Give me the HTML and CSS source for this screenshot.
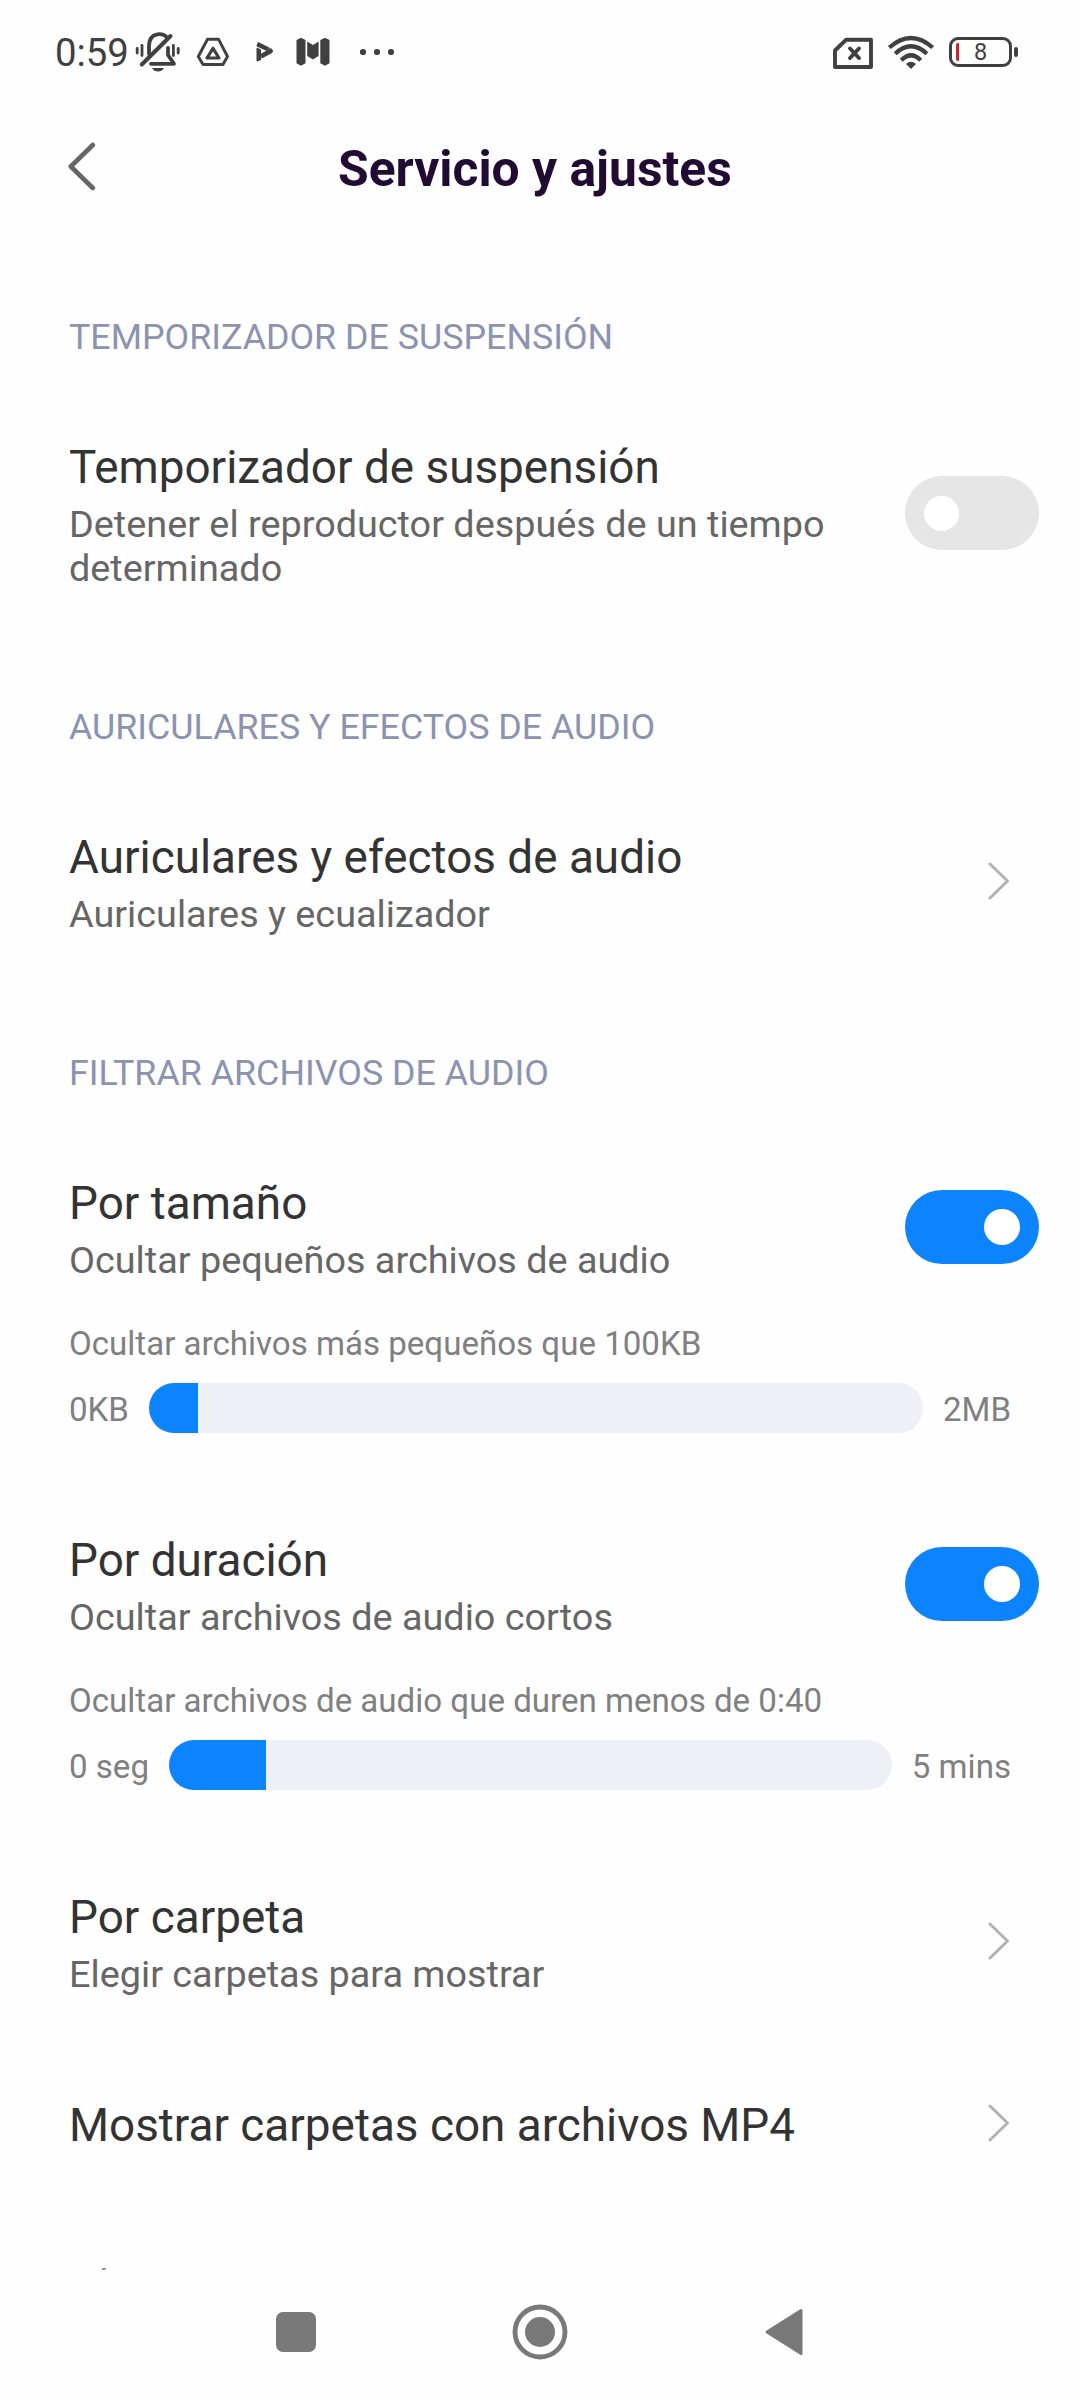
FILE: index.html
```
<!DOCTYPE html>
<html lang="es">
<head>
<meta charset="utf-8">
<title>Servicio y ajustes</title>
<link rel="stylesheet" href="styles.css">
</head>
<body>
<header class="status">
  <span class="clock">0:59</span>
  <svg class="bell" width="48" height="44" viewBox="134 30 48 44" fill="none" stroke="#404040" stroke-width="3.4" stroke-linecap="round" stroke-linejoin="round">
    <path d="M137.2 48.5v4.5M142 45.5v10M173.4 45.5v10M178.2 48.5v4.5" stroke-width="2.8"/>
    <path d="M149 54V46C149 31 165 32.500 167 38M168 48v7l6 8.800H151" stroke-width="3.800"/>
    <path d="M141.800 64.500L170.500 36" stroke-width="4"/>
    <path d="M152 68h12q-2 3.500-6 3.500t-6-3.500z" fill="#404040" stroke="none"/>
  </svg>
  <svg class="drive" width="34" height="32" viewBox="196 36 34 32" fill="none" stroke="#404040" stroke-linejoin="round">
    <path d="M207.500 39.200h11l9 17.300-4.500 8h-20l-4.700-8z" stroke-width="2.900"/>
    <path d="M213 48.300l6 9.700h-12z" stroke-width="3.200"/>
  </svg>
  <svg class="play" width="20" height="22" viewBox="255 41 20 22" fill="#404040" stroke="#404040" stroke-width="1.400" stroke-linejoin="round">
    <path d="M257.200 48.500l3.200 1.600v9.400l-3.200 1.200zM257.200 45.800l1.200-3 10.500 5.300-3 1.800zM261.800 54l5.500-3.200 3.600-1.800 1.500 2.200-.8 1.200-9.500 5.200z"/>
  </svg>
  <svg class="moovit" width="34" height="30" viewBox="296 37 34 30" fill="#404040">
    <path d="M296.500 40l4.500-2.300 4.500 2.300v23.200l-4.500 2.500-4.500-2.500zM320.300 40l4.700-2.300 4.500 2.300v23.200l-4.500 2.500-4.700-2.500zM307.200 41.500l5.700 3.500 5.700-3.500v14.500l-5.700 3.600-5.700-3.600z"/>
  </svg>
  <svg class="more" width="36" height="8" viewBox="359 48 36 8" fill="#404040"><circle cx="363" cy="52" r="3.100"/><circle cx="377" cy="52" r="3.100"/><circle cx="391" cy="52" r="3.100"/></svg>
  <svg class="sim" width="42" height="34" viewBox="832 36 42 34" fill="none" stroke="#404040" stroke-width="3.900" stroke-linecap="round" stroke-linejoin="round">
    <path d="M846 39.800h25v27.200h-36v-16.500zM850 48.500l9 9.500M859 48.500l-9 9.500"/>
  </svg>
  <svg class="wifi" width="48" height="36" viewBox="887 34 48 36" fill="none" stroke="#404040" stroke-width="4.300">
    <path d="M889.300 47.500Q911 28.500 932.700 47.500M895.200 53.700Q911 39 926.800 53.700M901.300 60.200Q911 50.500 920.700 60.200"/>
    <path d="M906 64q5-4.600 10 0l-5 5z" fill="#404040" stroke="none"/>
  </svg>
  <div class="battery"><i class="charge"></i><span>8</span></div><i class="nub"></i>
</header>

<div class="titlebar">
  <svg width="30" height="50" viewBox="67 141 30 50" fill="none" stroke="#666" stroke-width="4.600" stroke-linecap="round" stroke-linejoin="round"><path d="M92.800 145L70.800 166.500 92.800 188"/></svg>
  <h1>Servicio y ajustes</h1>
</div>

<main class="list">
  <h2>TEMPORIZADOR DE SUSPENSIÓN</h2>
  <div class="item">
    <div class="text"><div class="name">Temporizador de suspensión</div><div class="sub">Detener el reproductor después de un tiempo determinado</div></div>
    <div class="toggle"><i></i></div>
  </div>

  <h2>AURICULARES Y EFECTOS DE AUDIO</h2>
  <div class="item">
    <div class="text"><div class="name">Auriculares y efectos de audio</div><div class="sub">Auriculares y ecualizador</div></div>
    <svg class="go" width="22" height="38" viewBox="0 0 22 38"><path d="M2 2l17.500 17L2 36"/></svg>
  </div>

  <h2>FILTRAR ARCHIVOS DE AUDIO</h2>
  <div class="item">
    <div class="text"><div class="name">Por tamaño</div><div class="sub">Ocultar pequeños archivos de audio</div></div>
    <div class="toggle on"><i></i></div>
  </div>
  <div class="range">
    <div class="hint">Ocultar archivos más pequeños que 100KB</div>
    <div class="scale"><span>0KB</span><div class="track"><div class="fill" style="width:6.350%"></div></div><span>2MB</span></div>
  </div>
  <div class="item">
    <div class="text"><div class="name">Por duración</div><div class="sub">Ocultar archivos de audio cortos</div></div>
    <div class="toggle on"><i></i></div>
  </div>
  <div class="range">
    <div class="hint">Ocultar archivos de audio que duren menos de 0:40</div>
    <div class="scale"><span>0 seg</span><div class="track"><div class="fill" style="width:13.400%"></div></div><span>5 mins</span></div>
  </div>
  <div class="item">
    <div class="text"><div class="name">Por carpeta</div><div class="sub">Elegir carpetas para mostrar</div></div>
    <svg class="go" width="22" height="38" viewBox="0 0 22 38"><path d="M2 2l17.500 17L2 36"/></svg>
  </div>
  <div class="item single">
    <div class="text"><div class="name">Mostrar carpetas con archivos MP4</div></div>
    <svg class="go" width="22" height="38" viewBox="0 0 22 38"><path d="M2 2l17.500 17L2 36"/></svg>
  </div>
  <h2>TÉCNICO</h2>
</main>

<nav class="nav">
  <svg width="40" height="40" viewBox="0 0 40 40"><rect width="40" height="40" rx="7"/></svg>
  <svg width="56" height="56" viewBox="0 0 56 56"><circle cx="28" cy="28" r="25" fill="none" stroke="#797979" stroke-width="4.800"/><circle cx="28" cy="28" r="15"/></svg>
  <svg width="38" height="48" viewBox="0 0 38 48"><path d="M2 24L36 2.500v43z" stroke="#797979" stroke-width="3" stroke-linejoin="round"/></svg>
</nav>
</body>
</html>
```
FILE: styles.css
```
* { box-sizing: border-box; }
body { margin: 0; height: 2400px; display: flex; flex-direction: column; overflow: hidden; background: #fefefe; font-family: Roboto, sans-serif; }
svg { display: block; flex: none; }

.status { height: 104px; flex: none; display: flex; align-items: center; padding: 0 62px 0 55px; color: #404040; }
.clock { width: 79px; padding-top: 2px; font-size: 38.300px; line-height: 46px; }
.drive { margin-left: 14px; }
.play { margin-left: 25px; }
.moovit { margin-left: 21px; }
.more { margin-left: 29px; }
.sim { margin: 2px 13px 0 auto; }
.battery { width: 63px; height: 30px; margin-left: 14px; border: 3.300px solid #404040; border-radius: 9px; display: flex; align-items: center; font-size: 23.500px; line-height: 24px; }
.battery span { flex: 1; padding-left: 15px; }
.charge { width: 3px; height: 18px; margin-left: 4px; border-radius: 2px 0 0 2px; background: #c82828; }
.nub { width: 4px; height: 10px; margin-left: 2px; border-radius: 2px; background: #404040; }

.titlebar { height: 212px; flex: none; display: flex; align-items: flex-start; padding: 36px 0 0 67px; }
.titlebar svg { margin-top: 1px; }
h1 { margin: 0 0 0 241px; font-size: 49.750px; line-height: 58px; font-weight: 700; color: #220b33; }

.list { height: 1954px; flex: none; overflow: hidden; padding-left: 69px; }
h2 { margin: 0 0 82px; font-size: 35.800px; line-height: 42px; font-weight: 400; color: #8c93b1; }
.item { display: flex; align-items: center; padding-right: 41px; }
.item + h2 { margin-top: 116px; }
.text { width: 780px; }
.name { font-size: 45.870px; line-height: 54px; color: #333; }
.sub { margin-top: 8px; font-size: 37.800px; line-height: 44px; color: #666; }
.single { margin-top: 102px; }
.single + h2 { margin-top: 115px; }

.toggle { width: 134px; height: 74px; margin: 0 0 4px auto; padding: 0 19px; border-radius: 37px; background: #e6e6e6; display: flex; align-items: center; }
.toggle i { width: 35px; height: 35px; border-radius: 50%; background: #fff; }
.toggle.on { background: #0d84ff; justify-content: flex-end; }
.toggle.on i { width: 36px; height: 36px; }
.go { margin: 0 29px 4px auto; fill: none; stroke: #b2b2b2; stroke-width: 3; stroke-linecap: round; stroke-linejoin: round; }

.range { margin: 42px 0 100px; padding-right: 69px; font-size: 33.080px; line-height: 39px; color: #808080; }
.scale { display: flex; align-items: center; gap: 20px; margin-top: 20px; line-height: 50px; }
.scale span { height: 50px; padding-top: 2px; }
.track { flex: 1; height: 50px; border-radius: 25px; overflow: hidden; background: #edf0f5; }
.fill { height: 100%; background: #0d84ff; }

.nav { height: 130px; flex: none; display: flex; align-items: center; padding: 0 0 6px 276px; fill: #797979; }
.nav svg + svg { margin-left: 196px; }
.nav svg:last-child { margin-left: 197px; }
```
